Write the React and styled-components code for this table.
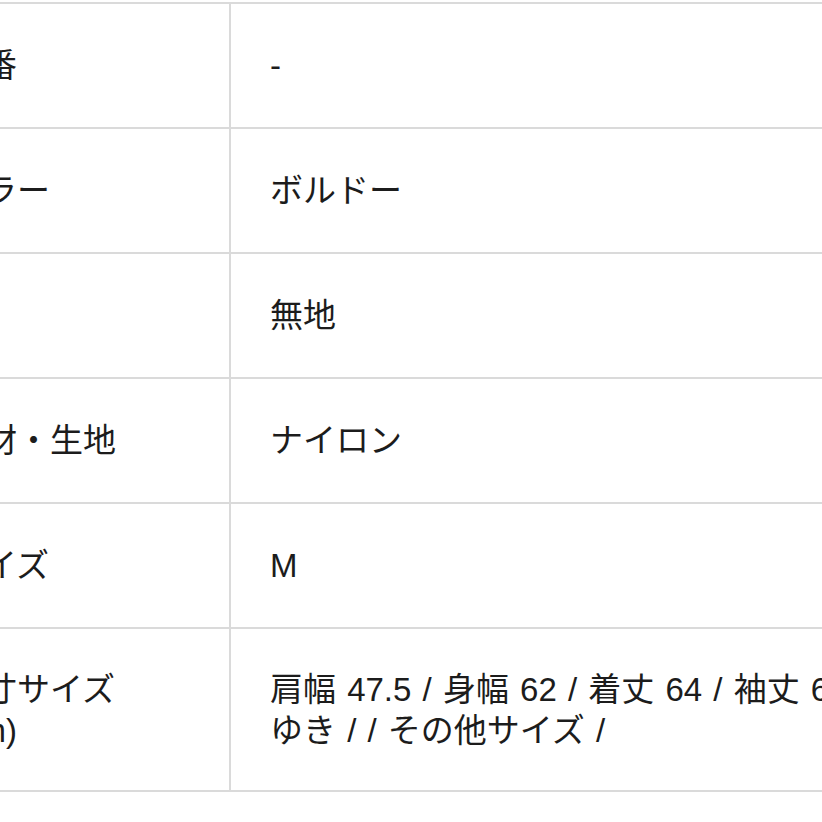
import React from 'react';
import styled, { createGlobalStyle } from 'styled-components';

const GlobalStyle = createGlobalStyle`
	html,
	body {
		margin: 0;
		background: #fff;
		overflow: hidden;
	}
	body {
		font-family: 'Liberation Sans', 'Noto Sans CJK JP', sans-serif;
		color: #1c1c1c;
	}
`;

const Page = styled.div`
	width: 822px;
	height: 822px;
	overflow: hidden;
	padding-top: 2px;
	box-sizing: border-box;
`;

const Table = styled.div`
	display: grid;
	grid-template-columns: 314px 900px;
	margin-left: -85px;
	border-top: 2px solid #dadada;
`;

const Cell = styled.div`
	display: flex;
	align-items: center;
	box-sizing: border-box;
	height: ${p => (p.$tall ? 163 : 125)}px;
	border-bottom: 2px solid #dadada;
	font-size: 33px;
	line-height: 41px;
	white-space: pre-line;
`;

const Label = styled(Cell)`
	padding: 0 20px 0 36px;
`;

const Value = styled(Cell)`
	padding: 0 40px 0 39px;
	border-left: 2px solid #dadada;
	word-spacing: 2px;
`;

const rows = [
	['品番', '-'],
	['カラー', 'ボルドー'],
	['柄', '無地'],
	['素材・生地', 'ナイロン'],
	['サイズ', 'M'],
	[
		'実寸サイズ\n(cm)',
		'肩幅 47.5 / 身幅 62 / 着丈 64 / 袖丈 60 /\nゆき / / その他サイズ /',
		true,
	],
];

export default function App() {
	return (
		<Page>
			<GlobalStyle />
			<Table>
				{rows.map(([label, value, tall]) => (
					<React.Fragment key={label}>
						<Label $tall={tall}>{label}</Label>
						<Value $tall={tall}>{value}</Value>
					</React.Fragment>
				))}
			</Table>
		</Page>
	);
}
